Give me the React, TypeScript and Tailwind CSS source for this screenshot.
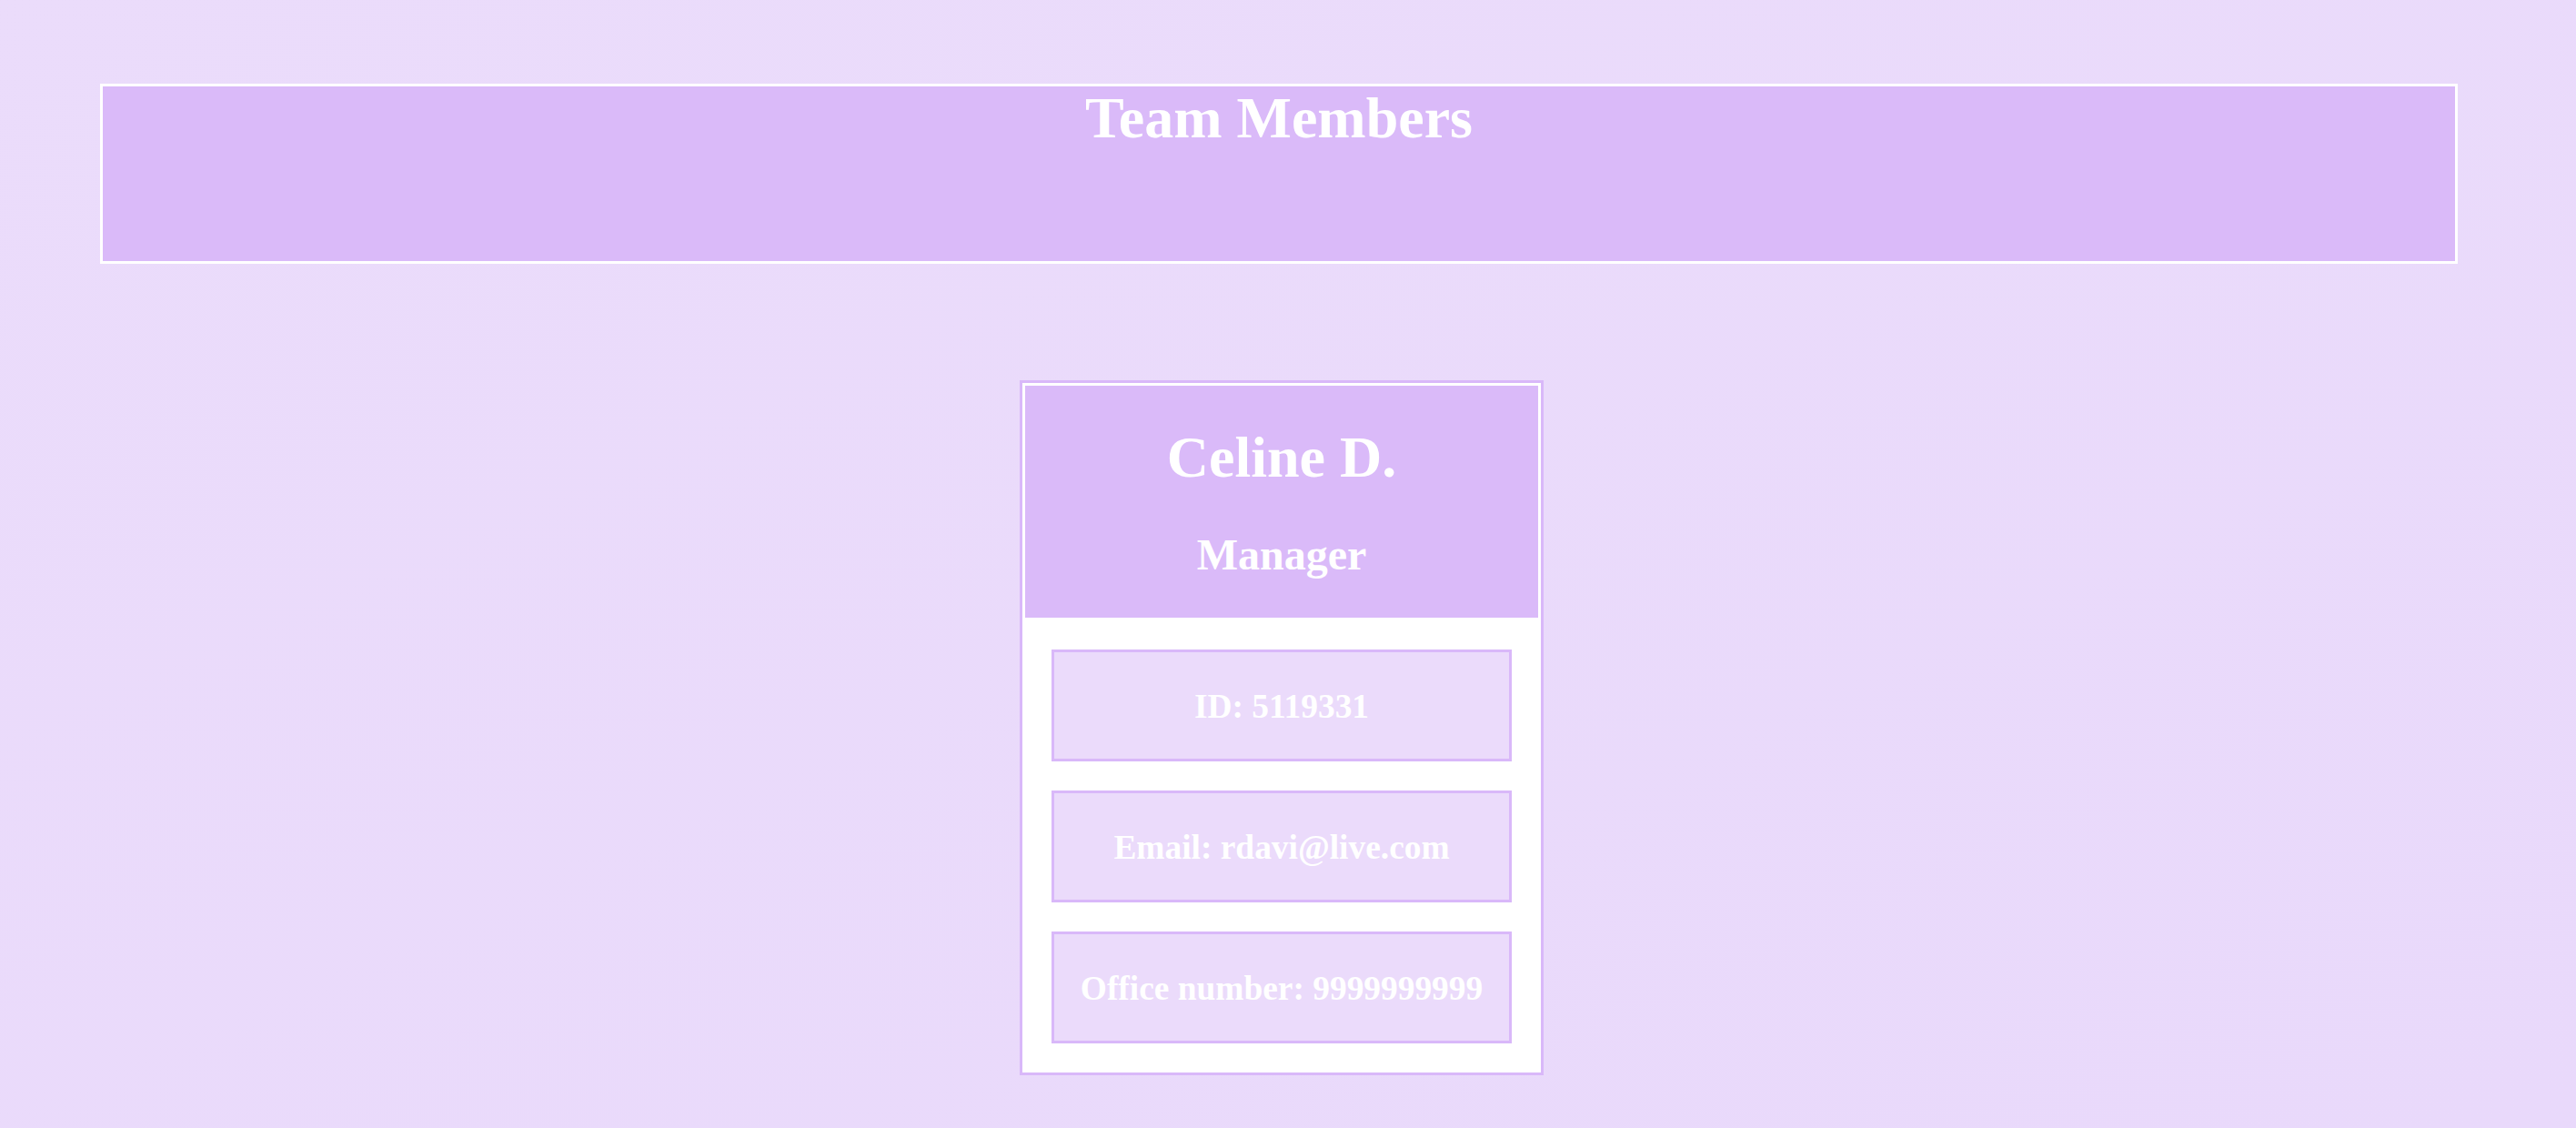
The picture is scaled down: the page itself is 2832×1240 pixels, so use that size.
import React from "react";

interface Employee {
  name: string;
  role: string;
  id: string;
  email: string;
  office: string;
}

const team: Employee[] = [
  {
    name: "Celine D.",
    role: "Manager",
    id: "5119331",
    email: "rdavi@live.com",
    office: "9999999999",
  },
];

const InfoRow: React.FC<{ children: React.ReactNode }> = ({ children }) => (
  <li className="flex h-[123px] items-center justify-center border-[3px] border-[#d9b8f9] bg-[#ebdbfb] pt-[2px]">
    <h3 className="text-[37.4px] font-bold leading-[1.107] text-white">{children}</h3>
  </li>
);

const App: React.FC = () => {
  return (
    <div
      className="min-h-screen bg-gradient-to-br from-[#ebdcfb] to-[#e9d9fb] pt-[92px] pb-[56px] pl-[110px] pr-[130px]"
      style={{ fontFamily: '"Liberation Serif", "Times New Roman", serif' }}
    >
      {/* Page header */}
      <header className="h-[198px] border-[3px] border-white bg-[#dabaf9]">
        <h1 className="text-center text-[64px] font-bold leading-[1.107] text-white">
          Team Members
        </h1>
      </header>

      <main className="mt-[128px] flex justify-center pl-[6px]">
        {team.map((member) => (
          <div
            key={member.id}
            className="w-[576px] border-[3px] border-[#d9b8f9] bg-white p-[3px]"
          >
            <div className="flex h-[255px] flex-col items-center bg-[#dabaf9] pt-[44px]">
              <h2 className="text-[64px] font-bold leading-[1.107] text-white">
                {member.name}
              </h2>
              <h3 className="mt-[44px] text-[48px] font-bold leading-[1.107] text-white">
                {member.role}
              </h3>
            </div>
            <ul className="flex flex-col gap-[32px] px-[29px] pt-[35px] pb-[29px]">
              <InfoRow>ID: {member.id}</InfoRow>
              <InfoRow>Email: {member.email}</InfoRow>
              <InfoRow>Office number: {member.office}</InfoRow>
            </ul>
          </div>
        ))}
      </main>
    </div>
  );
};

export default App;
